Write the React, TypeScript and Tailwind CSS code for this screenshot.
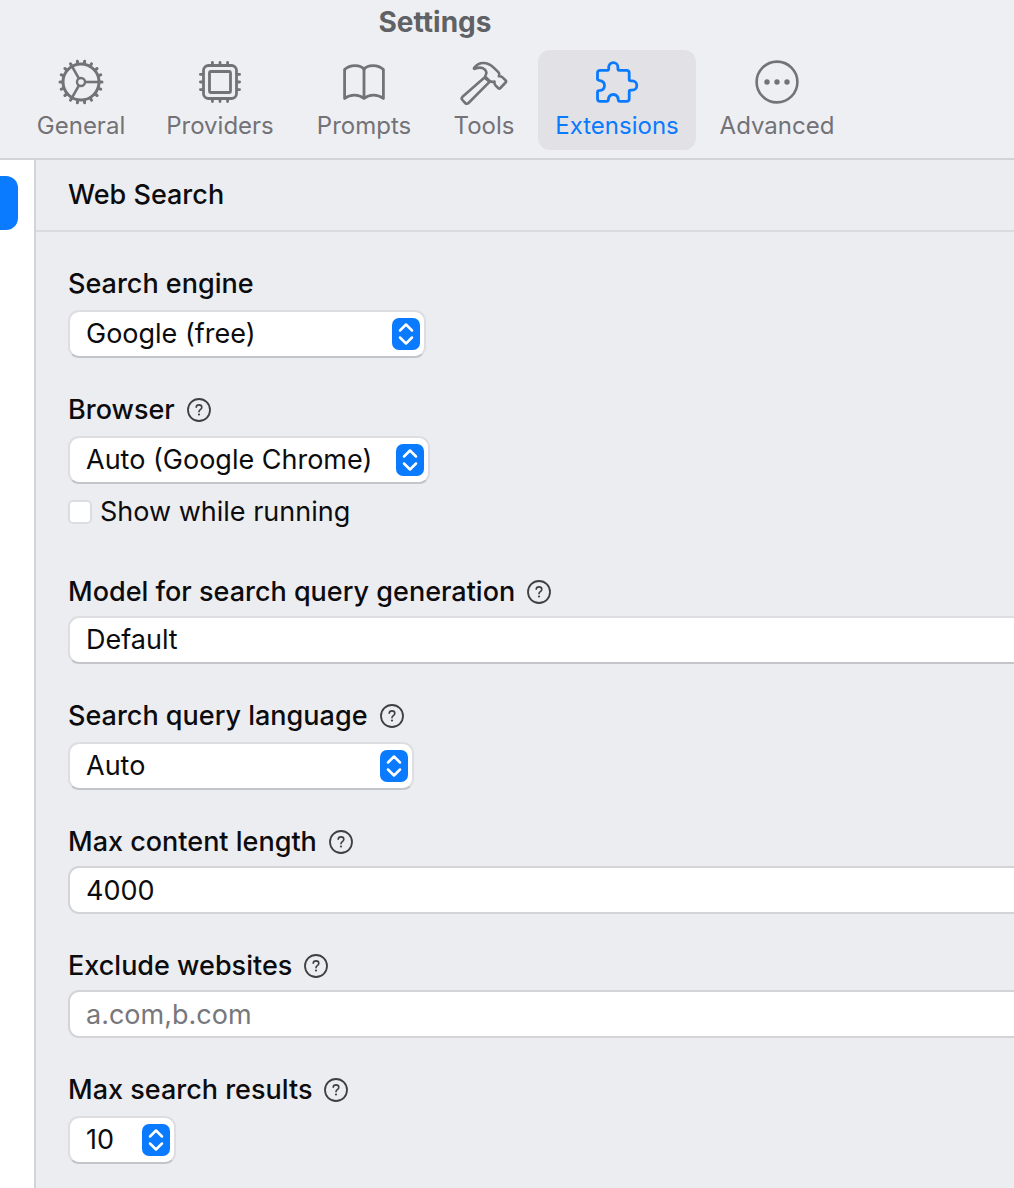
import type { ReactNode } from "react";

function GearIcon() {
  const teeth = Array.from({ length: 18 }, (_, i) => i * 20);
  return (
    <svg viewBox="0 0 48 48" className="size-12" fill="none" stroke="currentColor" aria-hidden="true">
      <circle cx="24" cy="24" r="18" strokeWidth="3" />
      <circle cx="24" cy="24" r="4" strokeWidth="2.4" />
      {teeth.map((a) => (
        <path key={a} d="M42.5 24H45" strokeWidth="3" strokeLinecap="round" transform={`rotate(${a} 24 24)`} />
      ))}
      {[0, 120, 240].map((a) => (
        <path key={a} d="M28 24H42" strokeWidth="2.6" transform={`rotate(${a} 24 24)`} />
      ))}
    </svg>
  );
}

function CpuIcon() {
  return (
    <svg viewBox="0 0 48 48" className="size-12" fill="none" stroke="currentColor" strokeLinecap="round" aria-hidden="true">
      <rect x="7.5" y="7.5" width="33" height="33" rx="5" strokeWidth="2.8" />
      <rect x="13.5" y="13.5" width="21" height="21" rx="1.5" strokeWidth="2.8" />
      <path
        d="M16.4 6V4.4M24 6V4.4M31.6 6V4.4M16.4 42v1.6M24 42v1.6M31.6 42v1.6M6 16.4H4.4M6 24H4.4M6 31.6H4.4M42 16.4h1.6M42 24h1.6M42 31.6h1.6"
        strokeWidth="2.8"
      />
    </svg>
  );
}

function BookIcon() {
  return (
    <svg viewBox="0 0 48 48" className="size-12" fill="none" stroke="currentColor" strokeWidth="2.8" strokeLinejoin="round" aria-hidden="true">
      <path d="M24 11.5C22.5 9 19 7.600 15 7.600C11 7.600 7.400 8.800 4.600 11.500V40.500C7.500 38.300 11 37.200 14.500 37.200C18.500 37.200 21.500 38.500 24 40.500C26.500 38.500 29.500 37.200 33.500 37.200C37 37.200 40.500 38.300 43.400 40.500V11.500C40.600 8.800 37 7.600 33 7.600C29 7.600 25.500 9 24 11.500Z" />
      <path d="M24 11.500V40.500" />
    </svg>
  );
}

function HammerIcon() {
  return (
    <svg viewBox="0 0 48 48" className="size-12" fill="none" stroke="currentColor" strokeWidth="2.6" strokeLinejoin="round" strokeLinecap="round" aria-hidden="true">
      <path d="M24.500 19.500L2.500 38.800C1.500 39.800 1.500 41 2.400 42L5.200 45C6.200 46.100 7.500 46 8.500 45L29.500 23.800Z" />
      <path d="M14.200 9.800C17.500 5.500 21.500 4.500 26 5.300C29.500 6 32.500 8.300 35.500 11.300L38.500 14.300C39.500 15.500 39.200 17.300 38.900 18.300C40.500 18.100 41.600 18.600 42.500 19.400L45.500 22.200C46.300 23 46.300 23.700 45.600 24.500L40.400 30C39.600 30.800 38.900 30.800 38.100 30L35.500 27.300C34.500 26.200 34.200 25 34.500 23.600C32.500 24.200 31 24 29.500 22.900L25.500 19C25 18.300 25.200 17.700 25.600 17.100C27.100 14.700 26.400 12.800 24.500 11.200C22 9.200 18.500 9.300 14.800 10.800C14 11 13.700 10.500 14.200 9.800Z" />
    </svg>
  );
}

function PuzzleIcon() {
  return (
    <svg viewBox="0 0 48 48" className="size-12" fill="none" stroke="currentColor" strokeWidth="2.8" strokeLinejoin="round" aria-hidden="true">
      <path d="M7.200 12.300H14.300C15.300 12.300 15.700 11.800 15.700 10.800V9.300C15.700 6.500 17.700 4.700 20.300 4.700C22.900 4.700 24.900 6.500 24.900 9.300V10.800C24.900 11.800 25.300 12.300 26.300 12.300H33.500C35.300 12.300 36.200 13.200 36.200 15V21.500C36.200 22.500 36.700 22.900 37.700 22.900H39.200C42 22.900 43.800 24.900 43.800 27.500C43.800 30.100 42 32.100 39.200 32.100H37.700C36.700 32.100 36.200 32.500 36.200 33.500V40.700C36.200 42.500 35.300 43.400 33.500 43.400H26.800C25.800 43.400 25.400 42.900 25.300 41.900C25 38.500 23 36.500 20.300 36.500C17.600 36.500 15.600 38.500 15.300 41.900C15.200 42.900 14.800 43.400 13.800 43.400H7.200C5.400 43.400 4.500 42.500 4.500 40.700V34.200C4.500 33.200 5 32.800 6 32.700C9.400 32.400 11.500 30.200 11.500 27.500C11.500 24.800 9.400 22.600 6 22.300C5 22.200 4.500 21.800 4.500 20.800V15C4.500 13.200 5.400 12.300 7.200 12.300Z" />
    </svg>
  );
}

function MoreIcon() {
  return (
    <svg viewBox="0 0 48 48" className="size-12" fill="none" stroke="currentColor" aria-hidden="true">
      <circle cx="24" cy="24" r="20.400" strokeWidth="2.600" />
      <g fill="currentColor" stroke="none">
        <circle cx="14" cy="24" r="2.700" />
        <circle cx="24" cy="24" r="2.700" />
        <circle cx="34" cy="24" r="2.700" />
      </g>
    </svg>
  );
}

const tabs = [
  { name: "General", icon: <GearIcon />, width: "w-[122px]" },
  { name: "Providers", icon: <CpuIcon />, width: "w-[140px]" },
  { name: "Prompts", icon: <BookIcon />, width: "w-[132px]" },
  { name: "Tools", icon: <HammerIcon />, width: "w-[92px]" },
  { name: "Extensions", icon: <PuzzleIcon />, width: "w-[158px]" },
  { name: "Advanced", icon: <MoreIcon />, width: "w-[146px]" },
];

function Help({ topic }: { topic: string }) {
  return (
    <button type="button" aria-label={`Help: ${topic}`} className="text-[#3f3f44]">
      <svg viewBox="0 0 24 24" className="size-6" fill="none" stroke="currentColor" aria-hidden="true">
        <circle cx="12" cy="12" r="11" strokeWidth="1.800" />
        <path d="M9.200 9.200C9.300 7.700 10.400 6.900 12 6.900C13.700 6.900 14.800 7.800 14.800 9.200C14.800 10.400 14.200 11 13.300 11.600C12.300 12.300 12 12.800 12 13.700" strokeWidth="1.600" strokeLinecap="round" />
        <circle cx="12" cy="16.500" r="1.100" fill="currentColor" stroke="none" />
      </svg>
    </button>
  );
}

function Label({ id, text, help = true }: { id: string; text: string; help?: boolean }) {
  return (
    <div className="flex h-8 items-center gap-3">
      <label htmlFor={id} className="font-medium">{text}</label>
      {help && <Help topic={text} />}
    </div>
  );
}

function Select({ id, value, width }: { id: string; value: string; width: string }) {
  return (
    <div className={`relative mt-2.5 ${width}`}>
      <select
        id={id}
        className="block h-12 w-full appearance-none rounded-[11px] border-2 border-[#dddde2] border-b-[#c4c4cb] bg-white pl-4"
      >
        <option>{value}</option>
      </select>
      <span className="pointer-events-none absolute top-2 right-1.5 flex h-8 w-7 items-center justify-center rounded-[7px] bg-[#0a7aff] text-white">
        <svg viewBox="0 0 28 32" className="h-8 w-7" fill="none" stroke="currentColor" strokeWidth="2.500" strokeLinecap="round" strokeLinejoin="round" aria-hidden="true">
          <path d="M8 12.500L14 6.500L20 12.500M8 19.500L14 25.500L20 19.500" />
        </svg>
      </span>
    </div>
  );
}

function Field({ children }: { children: ReactNode }) {
  return <div className="mb-9">{children}</div>;
}

const wideBox =
  "mt-2 block h-12 w-full appearance-none rounded-l-[11px] border-2 border-r-0 bg-white pl-4 placeholder:text-[#77777c]";

export default function App() {
  return (
    <div className="flex min-h-screen flex-col overflow-hidden bg-[#ecedf1] font-[Inter,sans-serif] text-[27px] leading-8 text-[#0c0c0e]">
      <header className="border-b-2 border-[#d2d3d8] bg-[#eeeff3] pb-2 pl-5">
        <div className="flex w-fit flex-col items-center">
          <h1 className="pt-1.5 text-[28px] leading-8 font-bold text-[#606165]">Settings</h1>
          <nav aria-label="Settings sections" className="mt-3 flex gap-2">
            {tabs.map((tab) => (
              <button
                key={tab.name}
                type="button"
                className={`flex h-[100px] shrink-0 flex-col items-center rounded-xl pt-2 text-2xl ${tab.width} ${
                  tab.name === "Extensions" ? "bg-[#e2e1e6] text-[#0a7aff]" : "text-[#727277]"
                }`}
              >
                {tab.icon}
                <span className="mt-1">{tab.name}</span>
              </button>
            ))}
          </nav>
        </div>
      </header>
      <div className="flex flex-1">
        <aside className="w-9 shrink-0 border-r-2 border-[#d2d3d8] bg-white pt-4">
          <button type="button" aria-label="Web Search" className="block h-[54px] w-[18px] rounded-r-xl bg-[#0a7aff]" />
        </aside>
        <main className="min-w-0 flex-1">
          <h2 className="flex h-[72px] items-center border-b-2 border-[#dadbdf] pl-8 font-medium">Web Search</h2>
          <form className="pt-9 pl-8">
            <Field>
              <Label id="engine" text="Search engine" help={false} />
              <Select id="engine" value="Google (free)" width="w-[358px]" />
            </Field>
            <div className="mb-12">
              <Label id="browser" text="Browser" />
              <Select id="browser" value="Auto (Google Chrome)" width="w-[362px]" />
              <label className="mt-3 flex w-fit items-center gap-2">
                <input
                  type="checkbox"
                  className="size-6 appearance-none rounded-[5px] border-2 border-[#dcdde2] bg-white checked:bg-[#0a7aff]"
                />
                Show while running
              </label>
            </div>
            <Field>
              <Label id="model" text="Model for search query generation" />
              <select id="model" className={`${wideBox} border-[#dddde2] border-b-[#c4c4cb]`}>
                <option>Default</option>
              </select>
            </Field>
            <Field>
              <Label id="language" text="Search query language" />
              <Select id="language" value="Auto" width="w-[346px]" />
            </Field>
            <Field>
              <Label id="length" text="Max content length" />
              <input id="length" type="text" defaultValue="4000" className={`${wideBox} border-[#d3d3d8]`} />
            </Field>
            <Field>
              <Label id="exclude" text="Exclude websites" />
              <input id="exclude" type="text" placeholder="a.com,b.com" className={`${wideBox} border-[#d3d3d8]`} />
            </Field>
            <div className="pb-6">
              <Label id="results" text="Max search results" />
              <Select id="results" value="10" width="w-[108px]" />
            </div>
          </form>
        </main>
      </div>
    </div>
  );
}
